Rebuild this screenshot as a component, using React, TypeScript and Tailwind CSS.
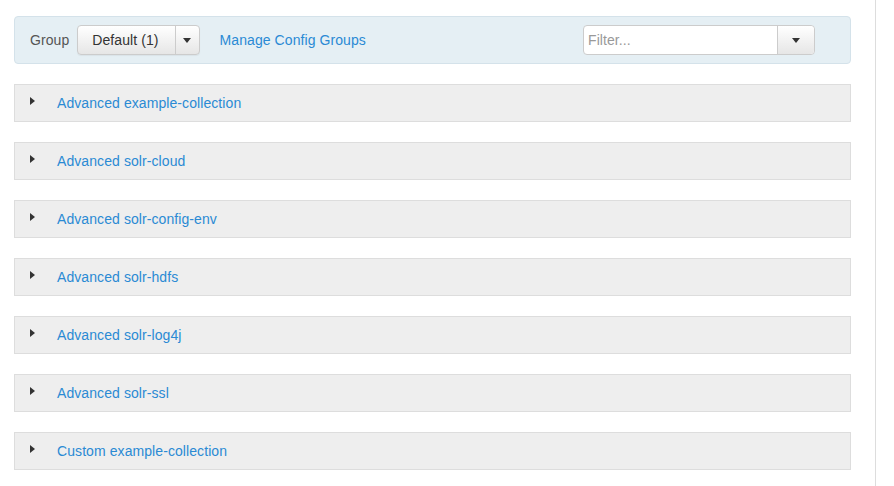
const sections = [
  'Advanced example-collection',
  'Advanced solr-cloud',
  'Advanced solr-config-env',
  'Advanced solr-hdfs',
  'Advanced solr-log4j',
  'Advanced solr-ssl',
  'Custom example-collection',
];

function Caret({ className }: { className?: string }) {
  return (
    <svg width="8" height="5" viewBox="0 0 8 5" className={className}>
      <path d="M0 0h8L4 5z" fill="#333" />
    </svg>
  );
}

export default function App() {
  return (
    <div className="flex h-[486px] w-[894px] bg-white font-['Liberation_Sans',Arial,sans-serif] text-[14px] tracking-[0.08px] text-[#333]">
      <div className="w-[876px] border-r border-[#ddd] pl-[14px] pr-[24px] pt-[16px]">
        <div className="flex h-[48px] items-center rounded-[4px] border border-[#d4e2ea] bg-[#e5eff4] pl-[15px] pr-[35px]">
          <span className="text-[#555]">Group</span>
          <div className="ml-[8px] flex h-[30px] rounded-[4px] border border-[#ccc] bg-gradient-to-b from-white to-[#e6e6e6] shadow-[0_1px_1px_rgba(0,0,0,0.05)]">
            <button className="pl-[14px] pr-[16px] text-[14px] text-[#333]">Default (1)</button>
            <button className="flex w-[24px] items-center justify-center border-l border-[#ccc]">
              <Caret />
            </button>
          </div>
          <a className="ml-[20px] text-[#2a8ad4]">Manage Config Groups</a>
          <div className="ml-auto flex h-[30px] w-[232px] rounded-[4px] border border-[#ccc] bg-white">
            <input
              placeholder="Filter..."
              className="min-w-0 flex-1 bg-transparent px-[4px] text-[14px] text-[#555] outline-none placeholder:text-[#999]"
            />
            <button className="flex w-[37px] items-center justify-center rounded-r-[4px] border-l border-[#ccc] bg-gradient-to-b from-white to-[#e6e6e6]">
              <Caret />
            </button>
          </div>
        </div>
        <div className="mt-[20px] flex flex-col gap-[20px]">
          {sections.map((s) => (
            <div key={s} className="flex h-[38px] items-center border border-[#ddd] bg-[#eee] pl-[15px]">
              <svg width="5" height="8" viewBox="0 0 5 8" className="mb-[4px]">
                <path d="M0 0l5 4-5 4z" fill="#333" />
              </svg>
              <a className="ml-[22px] text-[#2a8ad4]">{s}</a>
            </div>
          ))}
        </div>
      </div>
    </div>
  );
}
